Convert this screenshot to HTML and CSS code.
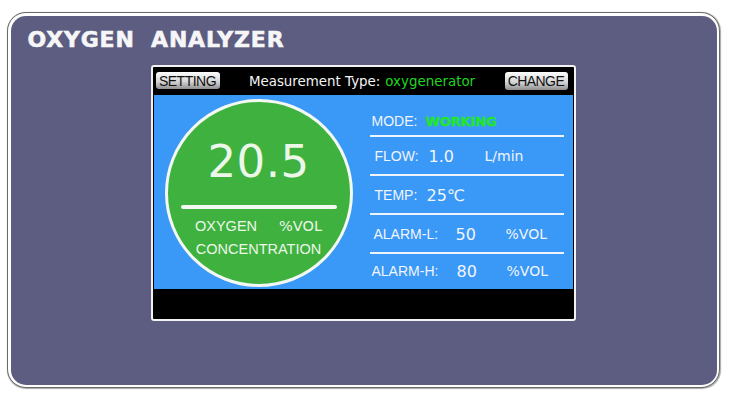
FILE: index.html
```html
<!DOCTYPE html>
<html>
<head>
<meta charset="utf-8">
<link rel="stylesheet" href="styles.css">
</head>
<body>
<div class="frame">
  <div class="panel">
    <h1 class="title">OXYGEN ANALYZER</h1>
    <div class="screen">
      <div class="topbar">
        <div class="btn btn-setting">SETTING</div>
        <div class="mtype">Measurement Type:<span class="mval">oxygenerator</span></div>
        <div class="btn btn-change">CHANGE</div>
      </div>
      <div class="main">
        <div class="gauge">
          <div class="reading">20.5</div>
          <div class="rule"></div>
          <div class="gauge-row"><span class="cap">OXYGEN</span><span class="unit-c">%VOL</span></div>
          <div class="gauge-row2 cap">CONCENTRATION</div>
        </div>
        <div class="info">
          <div class="row row-mode">
            <span class="lbl w-mode">MODE:</span><span class="status">WORKING</span>
          </div>
          <div class="row row-flow">
            <span class="lbl w-flow">FLOW:</span><span class="num w-v1">1.0</span><span class="unit">L/min</span>
          </div>
          <div class="row row-temp">
            <span class="lbl w-temp">TEMP:</span><span class="num">25℃</span>
          </div>
          <div class="row row-al">
            <span class="lbl w-al">ALARM-L:</span><span class="num w-v2">50</span><span class="unit">%VOL</span>
          </div>
          <div class="row row-ah">
            <span class="lbl w-ah">ALARM-H:</span><span class="num w-v2">80</span><span class="unit">%VOL</span>
          </div>
        </div>
      </div>
      <div class="bottombar"></div>
    </div>
  </div>
</div>
</body>
</html>
```
FILE: styles.css
```css
* { box-sizing: border-box; }
html, body { margin: 0; padding: 0; background: #ffffff; }
body { width: 738px; height: 410px; overflow: hidden; font-family: "Liberation Sans", Arial, sans-serif; }

.frame {
  margin: 12px 0 0 7px;
  width: 713px;
  height: 376px;
  border: 1.5px solid #6a6a6a;
  border-radius: 19px;
  padding: 2.5px;
  background: #ffffff;
  box-shadow: 0.5px 0.5px 1px rgba(0,0,0,0.35);
}
.panel {
  width: 100%;
  height: 100%;
  background: #5c5d80;
  border-radius: 15px;
  padding: 13px 0 0 17px;
}
.title {
  margin: 0;
  font-family: "DejaVu Sans", sans-serif;
  font-weight: bold;
  font-size: 22px;
  line-height: 22px;
  letter-spacing: 0.8px;
  word-spacing: 8px;
  color: #f6f6f8;
  -webkit-text-stroke: 0.6px #f6f6f8;
}
.screen {
  margin: 14px 0 0 123px;
  width: 425px;
  height: 256px;
  border: 2px solid #f2f2f2;
  border-radius: 3px;
  background: #000000;
  display: flex;
  flex-direction: column;
}
.topbar {
  height: 28px;
  display: flex;
  align-items: center;
  justify-content: space-between;
  padding: 0 6px 0 3px;
}
.btn {
  height: 17px;
  display: flex;
  align-items: center;
  justify-content: center;
  border-radius: 3px;
  background: linear-gradient(#fdfdfd, #d6d6d6 55%, #8f8f8f);
  color: #111111;
  font-size: 14px;
  letter-spacing: -0.5px;
}
.btn-setting { width: 64px; }
.btn-change { width: 63px; height: 18px; letter-spacing: -0.6px; }
.mtype {
  font-family: "DejaVu Sans", sans-serif;
  font-size: 13.4px;
  color: #f4f4f4;
  padding-top: 1px;
}
.mval { color: #1fd81f; margin-left: 5px; }

.main {
  height: 194px;
  margin: 0 1px;
  background: #3a98f6;
  display: flex;
  align-items: flex-start;
}
.gauge {
  margin: 4px 0 0 11px;
  width: 188px;
  height: 188px;
  border-radius: 50%;
  border: 3px solid #f3f8f2;
  background: #3eb13e;
  display: flex;
  flex-direction: column;
  align-items: center;
  padding-top: 37px;
  color: #ecf7ea;
}
.reading {
  font-family: "DejaVu Sans", sans-serif;
  font-size: 45px;
  line-height: 46px;
  height: 46px;
  letter-spacing: 0.5px;
}
.rule {
  margin-top: 20px;
  width: 156px;
  height: 4px;
  border-radius: 2px;
  background: #f3f8f2;
}
.cap { font-size: 14.5px; }
.gauge-row {
  margin-top: 9px;
  height: 16px;
  line-height: 16px;
  display: flex;
  gap: 22px;
}
.unit-c { font-family: "DejaVu Sans", sans-serif; font-size: 14.5px; }
.gauge-row2 { margin-top: 7px; height: 16px; line-height: 16px; }

.info {
  margin-left: 17px;
  width: 194px;
  display: flex;
  flex-direction: column;
  color: #f1f5fd;
}
.row {
  height: 39px;
  padding-top: 2px;
  border-bottom: 2px solid #eef4fc;
  display: flex;
  align-items: center;
  white-space: nowrap;
}
.row-mode { height: 42px; padding: 13px 0 0 2px; }
.row-flow, .row-temp { padding-left: 5px; }
.row-al { padding-left: 4px; }
.row-ah { height: 35px; padding: 0 0 0 2px; border-bottom: none; }
.lbl { font-size: 14px; }
.w-mode { width: 54px; }
.w-flow { width: 54px; }
.w-temp { width: 52px; }
.w-al { width: 82px; }
.w-ah { width: 85px; }
.num { font-family: "DejaVu Sans", sans-serif; font-size: 16px; }
.w-v1 { width: 56px; }
.w-v2 { width: 50px; }
.unit { font-family: "DejaVu Sans", sans-serif; font-size: 14px; }
.status {
  font-family: "DejaVu Sans", sans-serif;
  font-weight: bold;
  font-size: 13px;
  letter-spacing: -0.1px;
  color: #22e62a;
  -webkit-text-stroke: 0.4px #22e62a;
}
.bottombar { flex: 1; }
```
